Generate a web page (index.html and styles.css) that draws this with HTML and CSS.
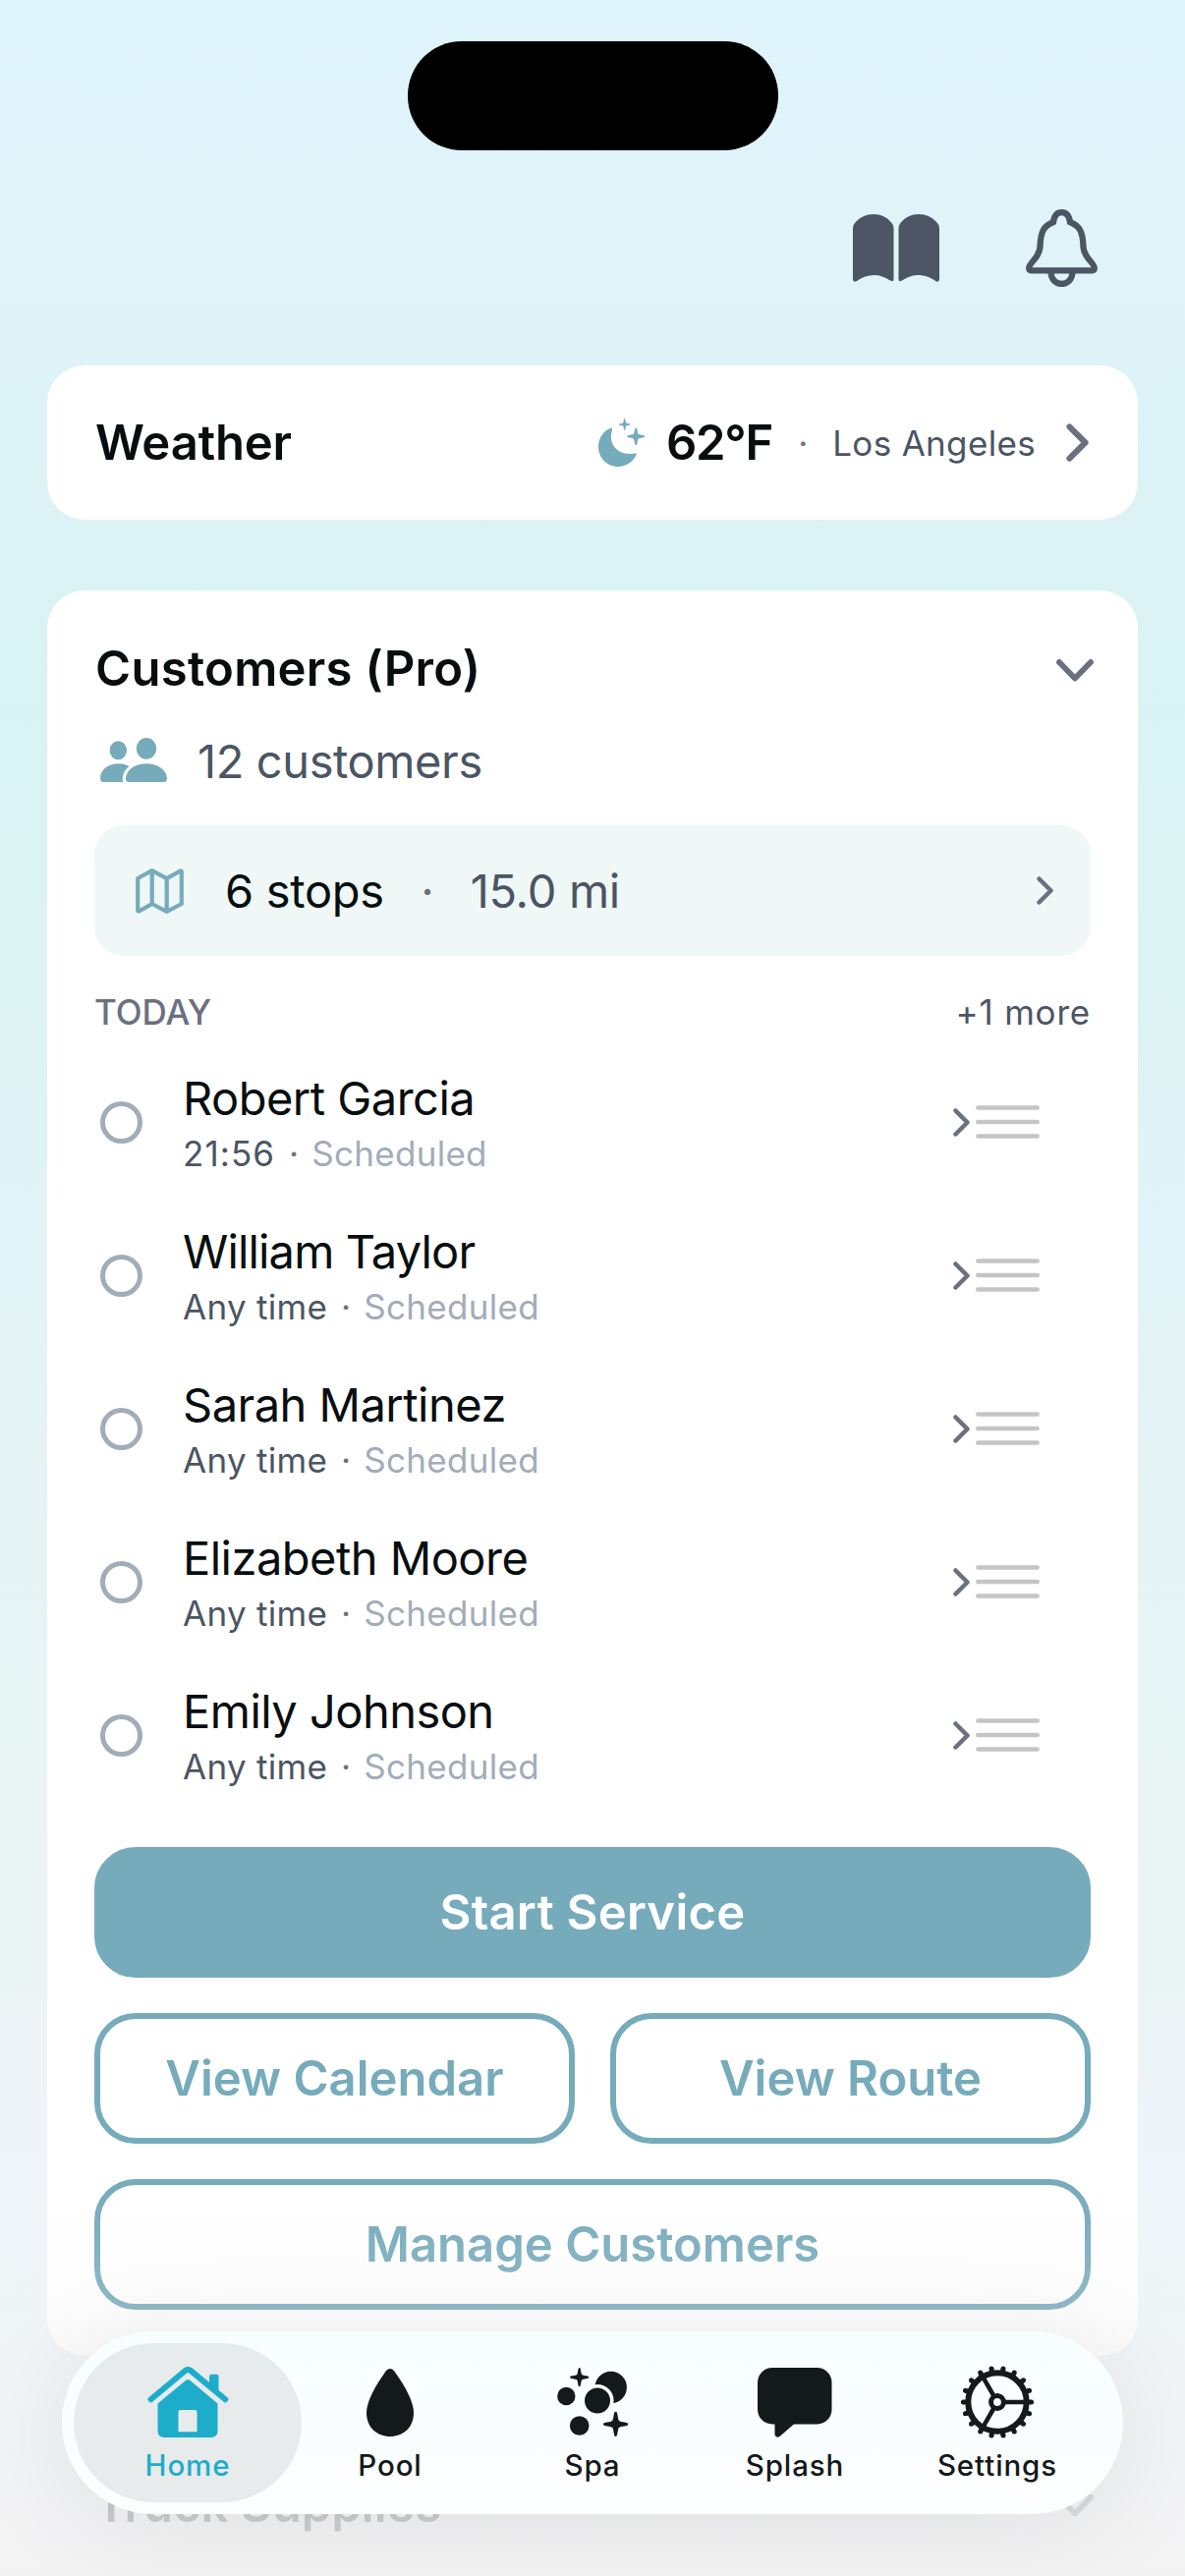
FILE: index.html
```html
<!DOCTYPE html>
<html lang="en">
<head>
    <meta charset="UTF-8">
    <meta name="viewport" content="width=device-width, initial-scale=1.0">
    <title>Home</title>
    <link rel="stylesheet" href="styles.css">
</head>
<body>
    <!-- shared shapes -->
    <svg class="defs" width="0" height="0">
        <symbol id="chevron" viewBox="0 0 17 29"><path d="M2.5 2.5L14.5 14.5L2.5 26.5" /></symbol>
        <symbol id="chevron-down" viewBox="0 0 38 23"><path d="M3 3L19 19.5L35 3" /></symbol>
        <symbol id="lines" viewBox="0 0 65 34"><path d="M2.3 2.5H62.7M2.3 17H62.7M2.3 31.5H62.7" /></symbol>
        <symbol id="spark" viewBox="-10 -10 20 20"><path d="M0 -10C1.8 -10 1.4 -4 2.700 -2.700C4 -1.400 10 -1.800 10 0S4 1.400 2.700 2.700C1.400 4 1.800 10 0 10S-1.400 4 -2.700 2.700C-4 1.400 -10 1.800 -10 0S-4 -1.400 -2.700 -2.700C-1.400 -4 -1.800 -10 0 -10Z" /></symbol>
    </svg>

    <div class="island"></div>

    <header class="toolbar">
        <svg class="book" width="88" height="69" viewBox="0 0 88 69">
            <path d="M0 14Q0 11 2 9C7 3 14 0 21 0S35 3 39.500 9Q41.500 11 41.500 14V66Q41.500 69.500 38 67.500C33 64 27 62 21.500 62S9 64 4 68Q0 70 0 66Z" />
            <path d="M46.500 14Q46.500 11 48.500 9C53 3 60 0 67 0S81 3 86 9Q88 11 88 14V66Q88 70 84 68C79 64 72 62 66.500 62S55 64 50 67.500Q46.500 69.500 46.500 66Z" />
        </svg>
        <svg class="bell" width="73" height="79" viewBox="0 0 73 79">
            <path d="M3.200 60C3.200 54 14 50 14.500 38C15 23 18 17 28 13C29 6 32 3.200 36.500 3.200S44 6 45 13C55 17 58 23 58.500 38C59 50 69.800 54 69.800 60Q69.800 62.300 67.500 62.300H5.500Q3.200 62.300 3.200 60Z" />
            <path d="M25.500 64C26 80 47 80 47.500 64" />
        </svg>
    </header>

    <section class="card weather">
        <h2>Weather</h2>
        <svg class="moon" width="47" height="49" viewBox="0 0 47 49">
            <path d="M13 9.700C5 12 0 20 0 29C0 40 9 49 20 49C28 49 36 44 38.700 36.500Q39 35 37 35.400C22 38.500 9 28 14 11.500Q14.600 9.400 13 9.700Z" />
            <use href="#spark" x="20.700" y="0" width="12" height="12" />
            <use href="#spark" x="29.200" y="9.200" width="18" height="18" />
        </svg>
        <span class="temp">62°F</span>
        <span class="dot">·</span>
        <span class="city">Los Angeles</span>
        <svg class="chev" width="23" height="39"><use href="#chevron" /></svg>
    </section>

    <section class="card customers">
        <div class="card-head">
            <h2>Customers (Pro)</h2>
            <svg class="chev-down" width="38" height="23"><use href="#chevron-down" /></svg>
        </div>

        <div class="count">
            <svg class="people" width="68" height="45" viewBox="0 0 68 45">
                <ellipse cx="18.300" cy="12.800" rx="8.700" ry="9.500" />
                <ellipse cx="47" cy="10.900" rx="10.200" ry="10.900" />
                <path d="M3 45Q0 45 0 41C0 33 8 26.300 18 26.300C22 26.300 26 27 29.500 29C24.500 33 21.500 39 23.200 45Z" />
                <path d="M29.500 45Q25.500 45 26 41C27 32 36 26.300 47 26.300S67 32 68 41Q68 45 65 45Z" />
            </svg>
            <span>12 customers</span>
        </div>

        <div class="stops">
            <svg class="map" width="49" height="46" viewBox="0 0 49 46">
                <path d="M2.200 10L16.700 2.200L31.700 10.200L45.300 2.600Q46.800 2 46.800 3.500V36L31.700 43.800L16.700 36L3.700 43.300Q2.200 44 2.200 42.500ZM16.700 2.200V36M31.700 10.200V44" />
            </svg>
            <span class="stop-count">6 stops</span>
            <span class="dot">·</span>
            <span class="miles">15.0 mi</span>
            <svg class="chev" width="17" height="29"><use href="#chevron" /></svg>
        </div>

        <div class="today">
            <span class="today-label">TODAY</span>
            <span class="more">+1 more</span>
        </div>

        <ul class="list">
            <li>
                <i class="ring"></i>
                <div class="who">
                    <p class="name">Robert Garcia</p>
                    <p class="when"><span class="clock">21:56</span><span class="dot">·</span><em>Scheduled</em></p>
                </div>
                <svg class="chev" width="17" height="29"><use href="#chevron" /></svg>
                <svg class="lines" width="65" height="34"><use href="#lines" /></svg>
            </li>
            <li>
                <i class="ring"></i>
                <div class="who">
                    <p class="name tight">William Taylor</p>
                    <p class="when"><span>Any time</span><span class="dot">·</span><em>Scheduled</em></p>
                </div>
                <svg class="chev" width="17" height="29"><use href="#chevron" /></svg>
                <svg class="lines" width="65" height="34"><use href="#lines" /></svg>
            </li>
            <li>
                <i class="ring"></i>
                <div class="who">
                    <p class="name">Sarah Martinez</p>
                    <p class="when"><span>Any time</span><span class="dot">·</span><em>Scheduled</em></p>
                </div>
                <svg class="chev" width="17" height="29"><use href="#chevron" /></svg>
                <svg class="lines" width="65" height="34"><use href="#lines" /></svg>
            </li>
            <li>
                <i class="ring"></i>
                <div class="who">
                    <p class="name">Elizabeth Moore</p>
                    <p class="when"><span>Any time</span><span class="dot">·</span><em>Scheduled</em></p>
                </div>
                <svg class="chev" width="17" height="29"><use href="#chevron" /></svg>
                <svg class="lines" width="65" height="34"><use href="#lines" /></svg>
            </li>
            <li>
                <i class="ring"></i>
                <div class="who">
                    <p class="name">Emily Johnson</p>
                    <p class="when"><span>Any time</span><span class="dot">·</span><em>Scheduled</em></p>
                </div>
                <svg class="chev" width="17" height="29"><use href="#chevron" /></svg>
                <svg class="lines" width="65" height="34"><use href="#lines" /></svg>
            </li>
        </ul>

        <div class="buttons">
            <button class="btn primary">Start Service</button>
            <button class="btn">View Calendar</button>
            <button class="btn">View Route</button>
            <button class="btn wide">Manage Customers</button>
        </div>
    </section>

    <section class="supplies">
        <h2>Truck Supplies</h2>
        <svg class="chev-down" width="38" height="23"><use href="#chevron-down" /></svg>
    </section>

    <div class="fade"></div>

    <nav class="tabs">
        <a class="tab active">
            <span class="icon">
                <svg width="83" height="73" viewBox="0 0 83 73">
                    <path class="roof" d="M3.500 33.200L38.500 4Q41.200 2 44 4L79.300 33.200" />
                    <path d="M63 22V10Q63 7.700 65.300 7.700H70.200Q72.500 7.700 72.500 10V31Z" />
                    <path fill-rule="evenodd" d="M39.500 13.500Q41.200 12.300 43 13.500L71.500 37.500V65Q71.500 72 65 72H17Q10.500 72 10.500 65V37.500ZM33.500 44Q31.500 44 31.500 46V66.200H50.500V46Q50.500 44 48.500 44Z" />
                </svg>
            </span>
            <span class="label">Home</span>
        </a>
        <a class="tab">
            <span class="icon">
                <svg width="48" height="69" viewBox="0 0 48 69">
                    <path d="M20 2Q24 -2 28 2C35 12 48 31 48 45C48 60 37 69 24 69S0 60 0 45C0 31 13 12 20 2Z" />
                </svg>
            </span>
            <span class="label">Pool</span>
        </a>
        <a class="tab">
            <span class="icon">
                <svg width="73" height="70" viewBox="0 0 73 70">
                    <use href="#spark" x="13" y="0" width="19.400" height="19.400" />
                    <circle cx="9.300" cy="29" r="9.200" />
                    <circle cx="54.700" cy="20" r="16.200" />
                    <circle class="front" cx="41" cy="33.500" r="14.800" />
                    <circle cx="22.700" cy="59" r="9.800" />
                    <use href="#spark" x="46.800" y="44.600" width="25.600" height="25.600" />
                </svg>
            </span>
            <span class="label">Spa</span>
        </a>
        <a class="tab">
            <span class="icon">
                <svg width="76" height="71" viewBox="0 0 76 71">
                    <rect x="0" y="0" width="75.500" height="57.500" rx="15" />
                    <path d="M17.500 55V68Q18.500 72 22.500 70L38 56.500Z" />
                </svg>
            </span>
            <span class="label">Splash</span>
        </a>
        <a class="tab">
            <span class="icon">
                <svg class="gear" width="76" height="76" viewBox="-38 -38 76 76">
                    <circle r="34.600" pathLength="36" class="teeth" />
                    <circle r="33" pathLength="36" class="teeth" />
                    <circle r="29.700" stroke-width="6" />
                    <circle r="6.400" stroke-width="5" />
                    <path d="M8 0H28M-4 -7L-14 -24.300M-4 7L-14 24.300" stroke-width="4.500" />
                </svg>
            </span>
            <span class="label">Settings</span>
        </a>
    </nav>
</body>
</html>
```
FILE: styles.css
```css
* {
    box-sizing: border-box;
    margin: 0;
    padding: 0;
}
body {
    position: relative;
    width: 1206px;
    height: 2622px;
    overflow: hidden;
    font-family: Inter, "Liberation Sans", sans-serif;
    color: #080e0f;
    background: linear-gradient(#e0f4fb 0, #dff3f9 300px, #dcf2f5 530px, #d9f3f4 720px, #ddf2f3 1000px, #e1f3f8 1250px, #e4f3f5 1420px, #e7f4f4 1750px, #ebf4f5 2020px, #eff4fa 2180px, #eef5f7 2350px, #f3f3f5 2622px);
}
h2 {
    font-size: 49px;
    font-weight: 600;
    line-height: 60px;
}
.defs {
    position: absolute;
}

/* top */
.island {
    width: 377px;
    height: 111px;
    margin: 42px auto 0;
    border-radius: 55px;
    background: #000;
}
.toolbar {
    display: flex;
    justify-content: flex-end;
    gap: 88px;
    height: 219px;
    padding: 60px 89px 0 0;
}
.book {
    margin-top: 5px;
    fill: #4b5563;
}
.bell {
    fill: none;
    stroke: #4b5563;
    stroke-width: 6.300;
}

/* cards */
.card {
    margin: 0 48px;
    border-radius: 38px;
    background: #fff;
}
.chev, .chev-down {
    fill: none;
    stroke: #6b7080;
    stroke-width: 4.500;
    stroke-linecap: round;
    stroke-linejoin: round;
}
.chev-down {
    stroke-width: 5.800;
}
.dot {
    width: 10px;
    display: inline-flex;
    justify-content: center;
    color: #6b7080;
}
.weather {
    display: flex;
    align-items: center;
    height: 157px;
    padding: 0 50px 0 49px;
}
.weather h2 {
    flex: 1;
    letter-spacing: -0.150px;
}
.moon {
    fill: #76abbb;
}
.temp {
    margin: 0 26px 0 22px;
    font-size: 49px;
    font-weight: 600;
    letter-spacing: -1.200px;
}
.weather .dot {
    font-size: 35px;
}
.city {
    margin: 0 31px 0 25px;
    font-size: 35px;
    letter-spacing: 0.330px;
    color: #4b5563;
}

.customers {
    height: 1797px;
    margin-top: 72px;
    padding: 50px 48px 47px;
}
.card-head {
    display: flex;
    justify-content: space-between;
    align-items: center;
    padding-left: 1px;
}
.card-head h2 {
    letter-spacing: 0.300px;
}
.card-head .chev-down {
    margin: 3px -3px 0 0;
}
.count {
    display: flex;
    align-items: center;
    height: 60px;
    margin-top: 33px;
    font-size: 47px;
    letter-spacing: -0.400px;
    color: #4b5563;
}
.people {
    margin: 0 31px 1px 6px;
    fill: #76abbb;
}
.stops {
    display: flex;
    align-items: center;
    height: 133px;
    margin-top: 36px;
    padding: 0 38px 0 42px;
    border-radius: 30px;
    background: #eff8f7;
    font-size: 47px;
    letter-spacing: -0.300px;
}
.map {
    margin-right: 42px;
    fill: none;
    stroke: #76abbb;
    stroke-width: 4.200;
    stroke-linejoin: round;
}
.stops .dot {
    margin: 0 39px;
}
.miles {
    flex: 1;
    color: #4b5563;
}
.today {
    display: flex;
    justify-content: space-between;
    margin-top: 32px;
    font-size: 35px;
    line-height: 50px;
    color: #4b5563;
}
.today-label {
    font-weight: 500;
    color: #6b7080;
}
.more {
    letter-spacing: 0.800px;
}

/* visits */
.list {
    margin-top: 9px;
    list-style: none;
}
.list li {
    display: flex;
    align-items: center;
    height: 156px;
    padding: 0 52px 0 6px;
}
.ring {
    width: 43px;
    height: 43px;
    border: 5px solid #a3acb9;
    border-radius: 50%;
}
.who {
    flex: 1;
    padding: 7px 0 0 41px;
    line-height: 57px;
}
.name {
    font-size: 47px;
    letter-spacing: -0.520px;
}
.name.tight {
    letter-spacing: -0.850px;
}
.when {
    display: flex;
    font-size: 35px;
    letter-spacing: 0.300px;
    color: #4b5563;
}
.when .dot {
    margin: 0 13px 0 14px;
}
.when em {
    font-style: normal;
    color: #a3acb9;
}
.clock {
    letter-spacing: 1.100px;
}
.lines {
    margin-left: 6px;
    stroke: #c5c5c7;
    stroke-width: 4.500;
    stroke-linecap: round;
}

/* buttons */
.buttons {
    display: grid;
    grid-template-columns: 1fr 1fr;
    gap: 36px;
    margin-top: 36px;
}
.btn {
    height: 133px;
    border: 6px solid #76abbb;
    border-radius: 42px;
    background: none;
    font: 600 49px Inter, "Liberation Sans", sans-serif;
    color: #76abbb;
}
.primary, .wide {
    grid-column: span 2;
}
.primary {
    background: #76abbb;
    letter-spacing: 0.250px;
    color: #fff;
}

/* next card, mostly hidden by the tab bar */
.supplies {
    display: flex;
    justify-content: space-between;
    align-items: center;
    margin: 122px 93px 0 97px;
}
.fade {
    position: absolute;
    left: 0;
    right: 0;
    bottom: 0;
    height: 400px;
    background: linear-gradient(rgba(243, 243, 244, 0) 0, rgba(243, 243, 244, 0.2) 130px, rgba(243, 243, 244, 0.5) 200px, rgba(243, 243, 244, 0.8) 320px, rgba(243, 243, 244, 0.9) 400px);
}

/* tab bar */
.tabs {
    position: absolute;
    left: 63px;
    bottom: 63px;
    display: flex;
    width: 1080px;
    height: 186px;
    padding: 12px 25px;
    border-radius: 93px;
    background: linear-gradient(#f8fefe, #fcfdff);
    box-shadow: 0 12px 110px rgba(0, 0, 0, 0.08);
}
.tab {
    position: relative;
    flex: 1;
    display: flex;
    flex-direction: column;
    align-items: center;
    padding-top: 20px;
    color: #14191a;
    fill: #14191a;
}
.active {
    color: #1eaccb;
    fill: #1eaccb;
}
.active::before {
    content: "";
    position: absolute;
    inset: 0 -13px;
    border-radius: 81px;
    background: #e7ebeb;
}
.icon {
    position: relative;
    display: flex;
    align-items: center;
    height: 80px;
}
.label {
    position: relative;
    margin-top: 6px;
    font-size: 29.500px;
    font-weight: 500;
    line-height: 36px;
    letter-spacing: 0.900px;
}
.roof {
    fill: none;
    stroke: #1eaccb;
    stroke-width: 6;
    stroke-linecap: round;
}
.front {
    stroke: #f9fefe;
    stroke-width: 3.600;
}
.gear {
    fill: none;
    stroke: #14191a;
}
.teeth {
    stroke-width: 5;
    stroke-linecap: round;
    stroke-dasharray: 0 2;
}
```
